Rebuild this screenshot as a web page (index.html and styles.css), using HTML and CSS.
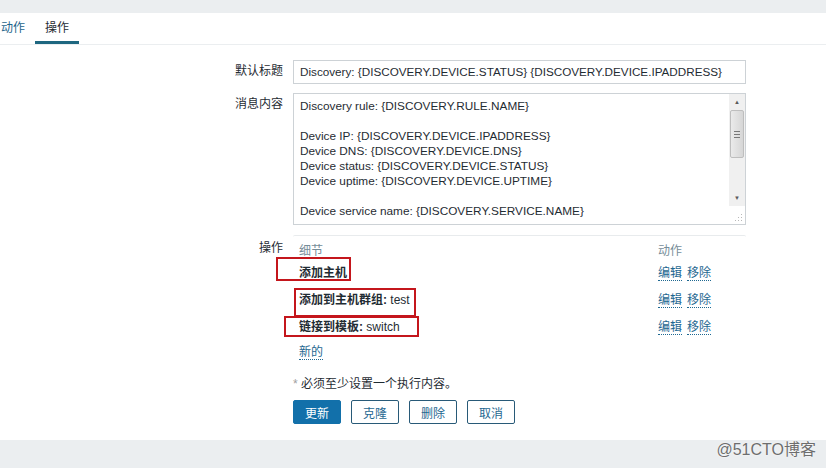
FILE: index.html
```html
<!DOCTYPE html>
<html>

<head>
    <meta charset="utf-8">
    <title>操作</title>
    <link rel="stylesheet" href="styles.css">
</head>

<body>
    <div class="top_band"></div>
    <main class="panel">
        <nav class="tabs">
            <a class="tab">动作</a>
            <a class="tab active">操作</a>
        </nav>
        <section class="form">
            <div class="form_label">默认标题</div>
            <div class="input">Discovery: {DISCOVERY.DEVICE.STATUS} {DISCOVERY.DEVICE.IPADDRESS}</div>

            <div class="form_label label_top">消息内容</div>
            <div class="textarea">
                <div class="textarea_text">Discovery rule: {DISCOVERY.RULE.NAME}

Device IP: {DISCOVERY.DEVICE.IPADDRESS}
Device DNS: {DISCOVERY.DEVICE.DNS}
Device status: {DISCOVERY.DEVICE.STATUS}
Device uptime: {DISCOVERY.DEVICE.UPTIME}

Device service name: {DISCOVERY.SERVICE.NAME}</div>
                <div class="scrollbar">
                    <div class="sb_arrow">&#9650;</div>
                    <div class="sb_thumb"><span class="grip"></span></div>
                    <div class="sb_track"></div>
                    <div class="sb_arrow">&#9660;</div>
                    <div class="sb_corner">
                        <svg width="8" height="8" viewBox="0 0 8 8">
                            <rect x="6" y="0" width="1" height="1" fill="#b8b8b8"/>
                            <rect x="3" y="3" width="1" height="1" fill="#b8b8b8"/>
                            <rect x="6" y="3" width="1" height="1" fill="#b8b8b8"/>
                            <rect x="0" y="6" width="1" height="1" fill="#b8b8b8"/>
                            <rect x="3" y="6" width="1" height="1" fill="#b8b8b8"/>
                            <rect x="6" y="6" width="1" height="1" fill="#b8b8b8"/>
                        </svg>
                    </div>
                </div>
            </div>

            <div class="form_label label_ops">操作</div>
            <div class="ops">
                <div class="ops_row ops_head">
                    <span>细节</span>
                    <span>动作</span>
                </div>
                <div class="ops_row">
                    <span><b>添加主机</b></span>
                    <span class="actions"><a class="link">编辑</a><a class="link">移除</a></span>
                </div>
                <div class="ops_row">
                    <span><b>添加到主机群组:</b> test</span>
                    <span class="actions"><a class="link">编辑</a><a class="link">移除</a></span>
                </div>
                <div class="ops_row">
                    <span><b>链接到模板:</b> switch</span>
                    <span class="actions"><a class="link">编辑</a><a class="link">移除</a></span>
                </div>
                <div class="ops_new"><a class="link">新的</a></div>
            </div>

            <div></div>
            <div class="notice"><span class="req">*</span> 必须至少设置一个执行内容。</div>

            <div></div>
            <div class="buttons">
                <button class="btn primary">更新</button>
                <button class="btn">克隆</button>
                <button class="btn">删除</button>
                <button class="btn">取消</button>
            </div>
        </section>
    </main>
    <footer class="bottom_band"></footer>

    <div class="mark mark_1"></div>
    <div class="mark mark_2"></div>
    <div class="mark mark_3"></div>
    <div class="watermark">@51CTO博客</div>
</body>

</html>
```

FILE: styles.css
```css
html {
    background-color: rgb(235, 238, 240);
}

body {
    margin: 0;
    position: relative;
    height: 468px;
    overflow: hidden;
    font-family: "Liberation Sans", "Noto Sans CJK SC", sans-serif;
    font-size: 12px;
    color: rgb(31, 44, 51);
}

.top_band {
    height: 13px;
}

.panel {
    height: 427px;
    background-color: #fff;
}

.bottom_band {
    height: 28px;
}

/* tabs */
.tabs {
    display: flex;
    margin-left: -9px;
    border-bottom: 1px solid rgb(235, 238, 240);
}

.tab {
    padding: 8px 10px 6px 10px;
    line-height: 14px;
    border-bottom: 3px solid transparent;
    color: rgb(31, 101, 140);
}

.tab.active {
    color: rgb(31, 44, 51);
    border-bottom-color: rgb(30, 103, 128);
}

/* form */
.form {
    display: grid;
    grid-template-columns: 283px 453px;
    column-gap: 10px;
    row-gap: 10px;
    margin-top: 15px;
}

.form_label {
    text-align: right;
    line-height: 14px;
    padding-top: 4px;
}

.label_top {
    padding-top: 3px;
}

.label_ops {
    padding-top: 6px;
}

.input {
    height: 22px;
    line-height: 22px;
    padding: 0 6px;
    font-size: 11.7px;
    border: 1px solid rgb(205, 210, 214);
    white-space: nowrap;
    overflow: hidden;
}

.textarea {
    display: flex;
    height: 130px;
    margin-top: -1px;
    border: 1px solid rgb(205, 210, 214);
}

.textarea_text {
    flex: 1;
    padding: 5px 6px 3px 6px;
    line-height: 15px;
    font-size: 11.8px;
    white-space: pre;
    overflow: hidden;
}

.scrollbar {
    width: 16px;
    display: flex;
    flex-direction: column;
    background-color: rgb(240, 240, 240);
}

.sb_arrow {
    height: 16px;
    line-height: 16px;
    text-align: center;
    font-size: 6px;
    color: rgb(90, 90, 90);
}

.sb_thumb {
    height: 46px;
    margin: 0 1px;
    border: 1px solid rgb(190, 190, 190);
    border-radius: 2px;
    background: linear-gradient(to right, rgb(234, 234, 234), rgb(214, 214, 214));
    display: flex;
    align-items: center;
    justify-content: center;
}

.grip {
    width: 6px;
    height: 5px;
    border-top: 1px solid rgb(120, 120, 120);
    border-bottom: 1px solid rgb(120, 120, 120);
    background: linear-gradient(rgb(120, 120, 120), rgb(120, 120, 120)) center / 6px 1px no-repeat;
}

.sb_track {
    flex: 1;
}

.sb_corner {
    height: 16px;
    background-color: #fff;
    display: flex;
    align-items: flex-end;
    justify-content: flex-end;
    padding: 0 2px 2px 0;
}

/* operations */
.ops {
    border-top: 1px solid rgb(232, 235, 237);
    border-radius: 2px;
}

.ops_row {
    display: grid;
    grid-template-columns: 359px 1fr;
    height: 27px;
    line-height: 22px;
    padding-left: 6px;
}

.ops_head {
    height: 22px;
    padding-top: 4px;
    color: rgb(118, 141, 153);
}

.ops_row b {
    font-weight: bold;
}

.actions {
    display: flex;
    gap: 5px;
    align-items: flex-start;
}

.link {
    color: rgb(31, 104, 145);
    line-height: 14px;
    margin-top: 4px;
    border-bottom: 1px dotted rgb(31, 104, 145);
}

.ops_new {
    height: 18px;
    line-height: 18px;
    padding-left: 6px;
}

.ops_new .link {
    margin-top: 0;
}

.notice {
    line-height: 14px;
    padding-top: 6px;
}

.req {
    color: rgb(160, 160, 160);
}

.buttons {
    display: flex;
    gap: 10px;
    margin-top: -1px;
}

.btn {
    width: 48px;
    height: 24px;
    padding: 0;
    font-family: inherit;
    font-size: 12px;
    color: rgb(31, 104, 145);
    background-color: #fff;
    border: 1px solid rgb(40, 90, 120);
    border-radius: 2px;
}

.btn.primary {
    color: #fff;
    background-color: rgb(18, 112, 170);
    border-color: rgb(18, 112, 170);
}

/* annotation boxes drawn over the screenshot */
.mark {
    position: absolute;
    border: 2px solid rgb(196, 22, 28);
}

.mark_1 {
    left: 276px;
    top: 257px;
    width: 71px;
    height: 20px;
}

.mark_2 {
    left: 294px;
    top: 288px;
    width: 118px;
    height: 25px;
}

.mark_3 {
    left: 284px;
    top: 316px;
    width: 131px;
    height: 17px;
}

.watermark {
    position: absolute;
    right: 10px;
    bottom: 8px;
    font-size: 16px;
    color: rgb(110, 110, 110);
    text-shadow: 0 0 2px #fff;
}
```
